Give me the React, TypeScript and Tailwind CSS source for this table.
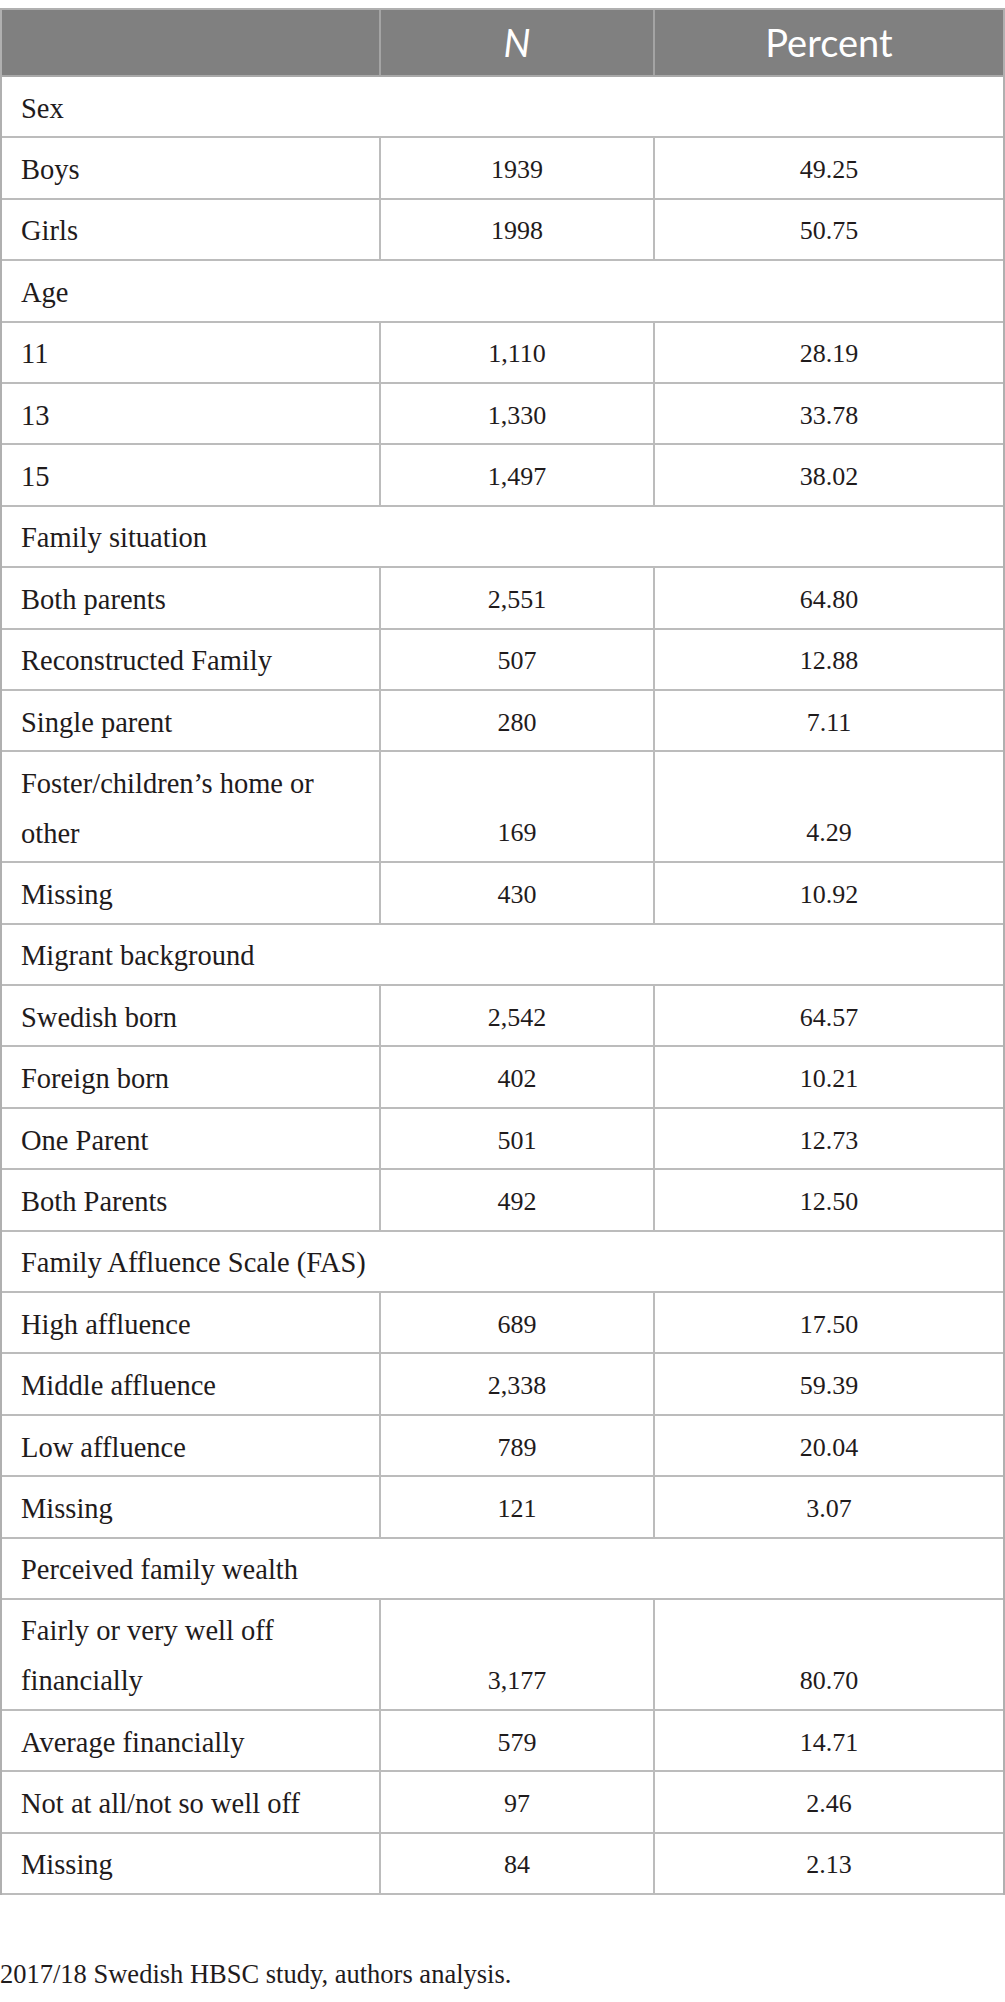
type Row =
  | { kind: "section"; label: string }
  | { kind: "data"; label: string[]; n: string; pct: string };

const rows: Row[] = [
  { kind: "section", label: "Sex" },
  { kind: "data", label: ["Boys"], n: "1939", pct: "49.25" },
  { kind: "data", label: ["Girls"], n: "1998", pct: "50.75" },
  { kind: "section", label: "Age" },
  { kind: "data", label: ["11"], n: "1,110", pct: "28.19" },
  { kind: "data", label: ["13"], n: "1,330", pct: "33.78" },
  { kind: "data", label: ["15"], n: "1,497", pct: "38.02" },
  { kind: "section", label: "Family situation" },
  { kind: "data", label: ["Both parents"], n: "2,551", pct: "64.80" },
  { kind: "data", label: ["Reconstructed Family"], n: "507", pct: "12.88" },
  { kind: "data", label: ["Single parent"], n: "280", pct: "7.11" },
  {
    kind: "data",
    label: ["Foster/children\u2019s home or", "other"],
    n: "169",
    pct: "4.29",
  },
  { kind: "data", label: ["Missing"], n: "430", pct: "10.92" },
  { kind: "section", label: "Migrant background" },
  { kind: "data", label: ["Swedish born"], n: "2,542", pct: "64.57" },
  { kind: "data", label: ["Foreign born"], n: "402", pct: "10.21" },
  { kind: "data", label: ["One Parent"], n: "501", pct: "12.73" },
  { kind: "data", label: ["Both Parents"], n: "492", pct: "12.50" },
  { kind: "section", label: "Family Affluence Scale (FAS)" },
  { kind: "data", label: ["High affluence"], n: "689", pct: "17.50" },
  { kind: "data", label: ["Middle affluence"], n: "2,338", pct: "59.39" },
  { kind: "data", label: ["Low affluence"], n: "789", pct: "20.04" },
  { kind: "data", label: ["Missing"], n: "121", pct: "3.07" },
  { kind: "section", label: "Perceived family wealth" },
  {
    kind: "data",
    label: ["Fairly or very well off", "financially"],
    n: "3,177",
    pct: "80.70",
  },
  { kind: "data", label: ["Average financially"], n: "579", pct: "14.71" },
  { kind: "data", label: ["Not at all/not so well off"], n: "97", pct: "2.46" },
  { kind: "data", label: ["Missing"], n: "84", pct: "2.13" },
];

function TableRow({ row }: { row: Row }) {
  if (row.kind === "section") {
    return (
      <div className="grid grid-cols-[379px_274px_1fr] h-[61.4px] border-b-2 border-[#bcbcbc]">
        <div className="col-span-3 flex items-center pt-[4px] px-[19px] leading-[50px] text-[28.5px] whitespace-nowrap">
          {row.label}
        </div>
      </div>
    );
  }

  const tall = row.label.length > 1;

  return (
    <div
      className={`grid grid-cols-[379px_274px_1fr] border-b-2 border-[#bcbcbc] ${
        tall ? "h-[111px]" : "h-[61.4px]"
      }`}
    >
      <div className="flex flex-col justify-center pt-[4px] px-[19px] leading-[50px] text-[28.5px] whitespace-nowrap border-r-2 border-[#bcbcbc]">
        {row.label.map((line) => (
          <span key={line}>{line}</span>
        ))}
      </div>
      <div
        className={`flex justify-center leading-[50px] border-r-2 border-[#bcbcbc] ${
          tall ? "items-end pb-[3px]" : "items-center pt-[4px]"
        }`}
      >
        {row.n}
      </div>
      <div
        className={`flex justify-center leading-[50px] ${
          tall ? "items-end pb-[3px]" : "items-center pt-[4px]"
        }`}
      >
        {row.pct}
      </div>
    </div>
  );
}

export default function App() {
  return (
    <div className="w-[1005px] min-h-[2002px] bg-white text-[#1f1b1c] font-[Liberation_Serif,serif] text-[26px]">
      <div className="pt-2">
        {/* Table */}
        <div className="border-t-2 border-x-2 border-[#b0b0b0]">
          {/* Header */}
          <div className="grid grid-cols-[379px_274px_1fr] h-[67px] bg-[#808080] border-b-2 border-[#a9a9a9] text-white font-[Lato,sans-serif] text-[38px]">
            <div className="border-r-2 border-[#a4a4a4]" />
            <div className="flex items-center justify-center italic border-r-2 border-[#a4a4a4]">
              N
            </div>
            <div className="flex items-center justify-center">Percent</div>
          </div>

          {rows.map((row, i) => (
            <TableRow key={i} row={row} />
          ))}
        </div>

        {/* Source note */}
        <p className="mt-[54px] leading-[50px] text-[26.5px]">
          2017/18 Swedish HBSC study, authors analysis.
        </p>
      </div>
    </div>
  );
}
